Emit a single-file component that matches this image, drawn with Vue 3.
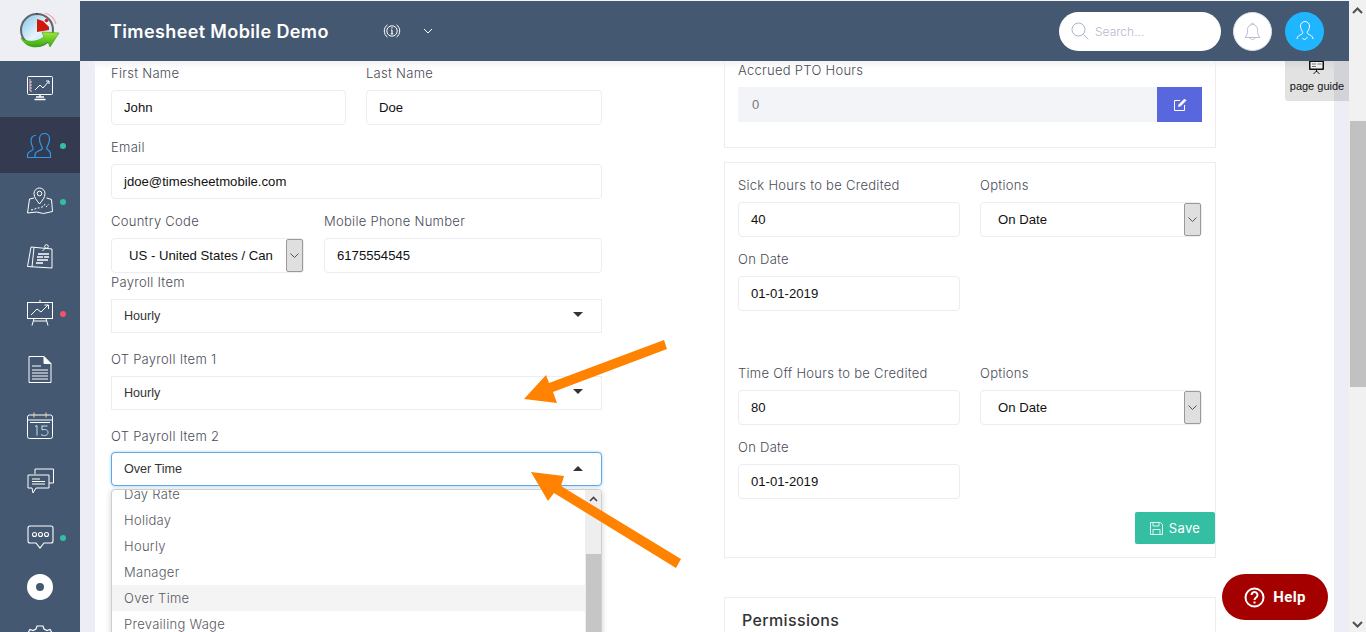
<script setup>
const navItems = [
  { id: 'dash' }, { id: 'users', active: true, dot: 'green' }, { id: 'map', dot: 'green' },
  { id: 'notes' }, { id: 'board', dot: 'red' }, { id: 'doc' }, { id: 'cal' },
  { id: 'chat' }, { id: 'msg', dot: 'green' }, { id: 'disc' }, { id: 'gear' }
]
const options = ['Day Rate', 'Holiday', 'Hourly', 'Manager', 'Over Time', 'Prevailing Wage']
</script>

<template>
  <div class="page">
    <div class="app">
      <header class="topbar">
        <div class="logo">
          <svg width="80" height="60" viewBox="0 1 80 60">
            <defs>
              <linearGradient id="face" x1="0" y1="0" x2="1" y2="1"><stop offset="0" stop-color="#7cc3ea"/><stop offset=".55" stop-color="#e6f5fc"/><stop offset="1" stop-color="#a9dbf2"/></linearGradient>
              <linearGradient id="green" x1="0" y1="0" x2="0" y2="1"><stop offset="0" stop-color="#a6e83c"/><stop offset="1" stop-color="#2ea80f"/></linearGradient>
            </defs>
            <path d="M44 16a12 12 0 0 1 9 9M45 13a16 16 0 0 1 11 11M42 18.500a9 9 0 0 1 8 7" fill="none" stroke="#e9a4a8" stroke-width="1.100"/>
            <circle cx="37" cy="30" r="16" fill="url(#face)" stroke="#62666c" stroke-width="2"/>
            <path d="M37 14.500v-1.500" stroke="#444" stroke-width="2"/>
            <path d="M37 32V19l6 2 6 6v3z" fill="#cf1a0a"/>
            <circle cx="46.500" cy="20.500" r="1.800" fill="#d0202a"/>
            <path d="M21 38c5 4 15 5 23-1l-2-5 17 1-9 14-2-5c-10 8-22 6-27-4z" fill="url(#green)" stroke="#3f9a10" stroke-width=".6"/>
          </svg>
        </div>
        <div class="bar">
          <h1 class="title">Timesheet Mobile Demo</h1>
          <svg class="info" width="20" height="16" viewBox="0 0 20 16" fill="none" stroke="#fff">
            <circle cx="10" cy="8" r="5.200"/>
            <path d="M5.500 1.800A7.600 7.600 0 0 0 5.500 14.200M14.500 1.800A7.600 7.600 0 0 1 14.500 14.200"/>
            <path d="M10 7v4M8.800 11h2.400M9 7h1M10 4.300v1.200" stroke-width="1.200"/>
          </svg>
          <svg class="caret" width="10" height="6" viewBox="0 0 10 6" fill="none" stroke="#fff"><path d="M1 1l4 4 4-4"/></svg>
          <div class="search">
            <svg width="18" height="18" viewBox="0 0 18 18" fill="none" stroke="#a9b4c4"><circle cx="7.500" cy="7.500" r="6.500"/><path d="M12.300 12.300l5 5"/></svg>
            <span>Search...</span>
          </div>
          <div class="round bell">
            <svg width="17" height="20" viewBox="0 0 17 20" fill="none" stroke="#b9bfd0"><path d="M1 16.500c2-2 2.500-4 2.500-8a5 5 0 0 1 10 0c0 4 .5 6 2.500 8z"/><path d="M7 3.500a1.500 1.500 0 0 1 3 0M6 17c1 2 4 2 5 0"/></svg>
          </div>
          <div class="round user">
            <svg width="18" height="20" viewBox="0 0 18 20" fill="none" stroke="#fff"><path d="M1 18c0-3 3-4 5-5 1-1 1-2 0-3-1-2-1.500-3.500-1.500-5a4.500 4.500 0 0 1 9 0c0 1.500-.5 3-1.500 5-1 1-1 2 0 3 2 1 5 2 5 5"/><path d="M6.500 17l2 2 3-3"/></svg>
          </div>
        </div>
      </header>

      <div class="body">
        <nav class="side">
          <div v-for="item in navItems" :key="item.id" class="nav" :class="{ active: item.active }">
            <svg v-if="item.id === 'dash'" width="26" height="26" viewBox="0 0 26 26" fill="none" stroke="#fff">
              <rect x=".5" y=".5" width="25" height="18" rx="1"/><path d="M9 21h8M13 19v2M7.500 23.500h11" stroke-width="1.500"/>
              <path d="M3 3v12h2M3 6h2M3 9h2M3 12h2" stroke="#f3c6d3"/><path d="M8 14l5-5 3 3 6-7M19 5h3v3"/>
            </svg>
            <svg v-else-if="item.id === 'users'" width="26" height="25" viewBox="0 0 26 25" fill="none" stroke="#2f9be8" stroke-width="1.200">
              <path d="M8 24.500v-3c0-3 5-3.500 7-5.500 1-1 0-2-1-4-1-2-1.500-4-1.500-6 0-3 2-5.500 5-5.500s5 2.500 5 5.500c0 2-.5 4-1.500 6-1 2-2 3-1 4 2 2 3.500 2 3.500 5.500v3z"/>
              <path d="M8 24.500H.5v-3c0-3 4-3 5.500-5 .5-1 0-2-1-4-1-2-1-4-1-5 0-3 2-5 4-5h1"/>
            </svg>
            <svg v-else-if="item.id === 'map'" width="26" height="28" viewBox="0 0 26 28" fill="none" stroke="#fff">
              <path d="M12.500 17c-3-4-5.500-6.500-5.500-10.500a5.500 5.500 0 0 1 11 0c0 4-2.500 6.500-5.500 10.500z"/><circle cx="12.500" cy="6.500" r="2.300"/>
              <path d="M7 11L2.500 12 .5 26l9-1 7 1.500 9-2-1-12-5-1.500"/><path d="M4 23c3 0 5-2 7-2s6-1 7-4M19 20l3-3" stroke-dasharray="2 1.500"/>
            </svg>
            <svg v-else-if="item.id === 'notes'" width="26" height="26" viewBox="0 0 26 26" fill="none" stroke="#fff">
              <path d="M4 3l21 2v19L.5 22.500z"/><path d="M7 3.500L5 23"/>
              <circle cx="19.500" cy="2.500" r="1.800"/><path d="M18.500 4l-3 3"/>
              <path d="M11 10h11M10 13h6M17 13h5M10 16h11M9 19h7" stroke-width="1.400"/>
            </svg>
            <svg v-else-if="item.id === 'board'" width="26" height="26" viewBox="0 0 26 26" fill="none" stroke="#fff">
              <rect x=".5" y="2.500" width="25" height="16"/><path d="M13 0v2.500M7 18.500l-2 7M19 18.500l2 7M6.500 21h13"/>
              <path d="M4 15l6-6 4 3 7-7M17.500 5h4v4"/>
            </svg>
            <svg v-else-if="item.id === 'doc'" width="24" height="27" viewBox="0 0 24 27" fill="none" stroke="#fff">
              <path d="M1 .5h15l7 7v19H1z"/><path d="M16 .5v7h7" fill="#fff"/>
              <path d="M4 10h9M4 14h16M4 17h16M4 20h16M4 23h16"/>
            </svg>
            <svg v-else-if="item.id === 'cal'" width="26" height="27" viewBox="0 0 26 27" fill="none" stroke="#fff">
              <rect x=".5" y="3" width="25" height="23.500" rx="2"/><path d="M.5 8h25M3 10.500h20"/><path d="M7 .5v5M19 .5v5" stroke="#f1d48a"/>
              <path d="M8 14.500l2-1v10M14.500 14h6M15 14v4c3-1 6-.5 6 2.500s-4 4-7 2" stroke="#bfe4f5"/>
            </svg>
            <svg v-else-if="item.id === 'chat'" width="27" height="26" viewBox="0 0 27 26" fill="none" stroke="#fff">
              <path d="M8 6V1h18.500v14H22"/><path d="M1 7h21v13H9l-3 5-1-5H1z"/>
              <path d="M5 11h8M5 13.500h13M5 16h13" stroke-width="1.100"/>
            </svg>
            <svg v-else-if="item.id === 'msg'" width="27" height="25" viewBox="0 0 27 25" fill="none" stroke="#fff" stroke-width="1.100">
              <path d="M3 1h21a2 2 0 0 1 2 2v13a2 2 0 0 1-2 2h-7l-4 5-4-5H3a2 2 0 0 1-2-2V3a2 2 0 0 1 2-2z"/>
              <circle cx="7.500" cy="9.500" r="2"/><circle cx="13.500" cy="9.500" r="2"/><circle cx="19.500" cy="9.500" r="2"/>
            </svg>
            <svg v-else-if="item.id === 'disc'" width="26" height="26" viewBox="0 0 26 26"><path fill="#fff" fill-rule="evenodd" d="M13 0a13 13 0 1 0 0 26a13 13 0 0 0 0-26zm0 9a4 4 0 1 1 0 8a4 4 0 0 1 0-8z"/></svg>
            <svg v-else width="26" height="26" viewBox="0 0 26 26" fill="none" stroke="#fff" stroke-width="1.200">
              <path d="M10 1h6l1 3 3 1.500 3-1 3 5-2 2.500v3l2 2.500-3 5-3-1L17 23l-1 3h-6l-1-3-3-1.500-3 1-3-5 2-2.500v-3L0 9.500l3-5 3 1L9 4z"/><circle cx="13" cy="13" r="4"/>
            </svg>
            <i v-if="item.dot" class="dot" :class="item.dot"></i>
          </div>
        </nav>

        <main class="main">
          <div class="card">
            <section class="left">
              <div class="row half">
                <div><label>First Name</label><div class="input">John</div></div>
                <div><label>Last Name</label><div class="input">Doe</div></div>
              </div>
              <div class="block mt12"><label>Email</label><div class="input">jdoe@timesheetmobile.com</div></div>
              <div class="row phone mt12">
                <div><label>Country Code</label>
                  <div class="input native country">US - United States / Can
                    <span class="spin"><svg width="9" height="5" viewBox="0 0 9 5" fill="none" stroke="#555"><path d="M.5.500l4 4 4-4"/></svg></span>
                  </div>
                </div>
                <div><label>Mobile Phone Number</label><div class="input">6175554545</div></div>
              </div>
              <div class="block mtn1"><label>Payroll Item</label><div class="input chosen">Hourly<i class="tri"></i></div></div>
              <div class="block mt16"><label>OT Payroll Item 1</label><div class="input chosen">Hourly<i class="tri"></i></div></div>
              <div class="block mt16"><label class="tight">OT Payroll Item 2</label><div class="input chosen focus">Over Time<i class="tri up"></i></div></div>
              <div class="drop">
                <ul class="opts">
                  <li v-for="o in options" :key="o" :class="{ hover: o === 'Over Time' }">{{ o }}</li>
                </ul>
                <div class="dropbar">
                  <svg width="9" height="6" viewBox="0 0 9 6" fill="none" stroke="#444" stroke-width="1.600"><path d="M1 5l3.500-3.500L8 5"/></svg>
                  <i class="thumb"></i>
                </div>
              </div>
            </section>

            <section class="right">
              <div class="box first">
                <label>Accrued PTO Hours</label>
                <div class="addon"><div class="input ro">0</div>
                  <button class="edit"><svg width="14" height="14" viewBox="0 0 14 14" fill="none" stroke="#fff"><path d="M7 2.500H1.500v10h10V7"/><path d="M5.500 8.500l.5-2L11.500 1l1.500 1.500L7.500 8z" fill="#fff" stroke-width=".7"/></svg></button>
                </div>
              </div>
              <div class="box second">
                <div class="row two">
                  <div><label>Sick Hours to be Credited</label><div class="input">40</div></div>
                  <div><label>Options</label><div class="input native date">On Date<span class="spin"><svg width="9" height="5" viewBox="0 0 9 5" fill="none" stroke="#555"><path d="M.5.500l4 4 4-4"/></svg></span></div></div>
                </div>
                <div class="row two mt12"><div><label>On Date</label><div class="input">01-01-2019</div></div></div>
                <div class="row two mt52">
                  <div><label>Time Off Hours to be Credited</label><div class="input">80</div></div>
                  <div><label>Options</label><div class="input native date">On Date<span class="spin"><svg width="9" height="5" viewBox="0 0 9 5" fill="none" stroke="#555"><path d="M.5.500l4 4 4-4"/></svg></span></div></div>
                </div>
                <div class="row two mt12"><div><label>On Date</label><div class="input">01-01-2019</div></div></div>
                <div class="actions">
                  <button class="save"><svg width="13" height="13" viewBox="0 0 13 13" fill="none" stroke="#dff5ef"><path d="M.5.500h10l2 2v10H.5z"/><path d="M3 .5v3.500h6V.5M3 12.500V7.500h7v5"/></svg>Save</button>
                </div>
              </div>
              <div class="box perms"><h2>Permissions</h2></div>
            </section>
          </div>
        </main>
      </div>
    </div>

    <aside class="scrollbar">
      <svg width="11" height="7" viewBox="0 0 11 7" fill="none" stroke="#505050" stroke-width="2"><path d="M1 6l4.500-4.500L10 6"/></svg>
      <i class="sthumb"></i>
      <svg class="down" width="11" height="7" viewBox="0 0 11 7" fill="none" stroke="#505050" stroke-width="2"><path d="M1 1l4.500 4.500L10 1"/></svg>
    </aside>

    <div class="guide">
      <svg width="16" height="16" viewBox="0 0 16 16"><rect x="0" y="0" width="15" height="11" rx="1" fill="#111"/><rect x="1.500" y="3" width="12" height="6.500" fill="#eee"/><path d="M3 5h4M8.500 5h4M3 7.500h4" stroke="#777"/><path d="M7.500 11v2M7.500 12l-3 3M7.500 12l3 3" stroke="#111"/></svg>
      <span>page guide</span>
    </div>

    <button class="help">
      <svg width="21" height="21" viewBox="0 0 21 21" fill="none" stroke="#fff" stroke-width="2"><circle cx="10.500" cy="10.500" r="9"/><path d="M7.500 8a3 3 0 1 1 4.500 2.600c-1 .6-1.500 1-1.500 2.400"/><path d="M10.500 14.500v2"/></svg>
      <span>Help</span>
    </button>

    <svg class="arrows" width="1366" height="632" viewBox="0 0 1366 632">
      <polygon fill="#ff8200" points="524,399 546,375 549,383 664,340 667,349 553,392 557,403"/>
      <polygon fill="#ff8200" points="531,472 564,476 561,486 681,559 676,568 554,493 548,501"/>
    </svg>
  </div>
</template>

<style>
html, body { margin: 0; height: 100%; overflow: hidden; background: #fff; }
</style>

<style scoped>
.page { position: relative; display: flex; width: 1366px; height: 632px; overflow: hidden; font-family: "Inter", "Liberation Sans", sans-serif; color: #575962; }
.app { flex: 1; min-width: 0; display: flex; flex-direction: column; }

.topbar { position: relative; z-index: 2; display: flex; height: 60px; margin-top: 1px; flex: none; }
.logo { width: 80px; background: #eeeff5; box-shadow: 0 -1px 0 #eeeff5; }
.logo svg { display: block; }
.bar { flex: 1; background: #445971; display: flex; align-items: center; padding-left: 30px; padding-right: 25px; box-shadow: 0 -1px 0 #f4f4f4; }
.title { margin: 0; width: 272px; font-size: 18px; font-weight: 600; color: #fff; white-space: nowrap; letter-spacing: .38px; }
.info { margin-right: 21px; }
.caret { margin-right: auto; }
.search { width: 162px; height: 39px; box-sizing: border-box; border-radius: 20px; background: #fff; display: flex; align-items: center; gap: 6px; padding-left: 12px; margin-right: 12px; font-size: 12px; font-weight: 300; color: #b9b6cf; }
.round { width: 39px; height: 39px; border-radius: 50%; display: flex; align-items: center; justify-content: center; box-sizing: border-box; }
.bell { background: #fff; margin-right: 13px; border: 1px solid #dfe0ea; }
.user { background: #1fb6ff; }

.body { flex: 1; min-height: 0; display: flex; }
.side { width: 80px; flex: none; background: #445971; display: flex; flex-direction: column; overflow: hidden; }
.nav { position: relative; height: 56px; flex: none; display: flex; align-items: center; justify-content: center; }
.nav.active { background: #343a50; }
.nav:nth-child(10) { height: 44px; }
.nav:nth-child(11) { height: 50px; margin-top: 4px; }
.dot { position: absolute; left: 60px; top: 50%; width: 6px; height: 6px; margin-top: -2px; border-radius: 50%; }
.dot.green { background: #34bfa3; }
.dot.red { background: #f4516c; }

.main { flex: 1; min-width: 0; background: #edeef5; padding: 0 15px; overflow: hidden; }
.card { background: #fff; height: 100%; display: flex; padding-left: 16px; box-shadow: inset 0 10px 10px -8px rgba(0,0,0,.08); }
.left { width: 491px; flex: none; padding-top: 2px; }
.right { width: 492px; flex: none; margin-left: 122px; }

label { display: block; height: 20px; line-height: 20px; margin-bottom: 7px; font-size: 13px; font-weight: 300; letter-spacing: .28px; color: #4a4c57; white-space: nowrap; }
label.tight { margin-bottom: 6px; }
.row { display: grid; gap: 20px; }
.half { grid-template-columns: 235px 236px; }
.phone { grid-template-columns: 193px 278px; }
.mt12 { margin-top: 12px; }
.mt16 { margin-top: 16px; }
.mt52 { margin-top: 52px; }
.mtn1 { margin-top: -1px; }

.input { position: relative; box-sizing: border-box; height: 35px; line-height: 33px; padding-left: 12px; background: #fff; border: 1px solid #ebedf2; border-radius: 4px; font-family: "Liberation Sans", Arial, sans-serif; font-size: 13.15px; color: #111; white-space: nowrap; }
.native.country, .native.date { padding-left: 17px; }
.spin { position: absolute; right: 0; top: 0; bottom: 0; width: 17px; box-sizing: border-box; display: flex; align-items: center; justify-content: center; background: #dfdfdf; border: 1px solid #9a9a9a; border-radius: 2px; }
.chosen { height: 34px; line-height: 33px; font-size: 12.6px; color: #333; border-radius: 0; padding-left: 12px; }
.tri { position: absolute; right: 18px; top: 12px; width: 0; height: 0; border-left: 5px solid transparent; border-right: 5px solid transparent; border-top: 5px solid #333; }
.tri.up { border-top: 0; border-bottom: 5px solid #333; top: 13px; }
.focus { border-color: #5ea9e6; border-radius: 4px; box-shadow: 0 0 3px rgba(94,169,230,.6); color: #333; }

.drop { display: flex; box-sizing: border-box; width: 491px; height: 200px; margin-top: 3px; background: #fff; border: 1px solid #cfcfcf; border-radius: 4px 4px 0 0; box-shadow: 0 1px 6px rgba(0,0,0,.18); overflow: hidden; }
.opts { flex: 1; list-style: none; margin: -9px 0 0; padding: 0; font-size: 13px; font-weight: 300; letter-spacing: .28px; color: #575962; }
.opts li { height: 26px; line-height: 26px; padding-left: 12px; }
.opts li.hover { background: #f4f4f4; }
.dropbar { width: 16px; flex: none; background: #eeeeee; display: flex; flex-direction: column; align-items: center; padding-top: 6px; box-sizing: border-box; }
.dropbar svg { flex: none; }
.thumb { display: block; width: 15px; flex: 1; margin-top: 52px; background: #c6c6c6; }

.box { box-sizing: border-box; border: 1px solid #ebedf2; padding: 0 13px; }
.first { margin-top: -30px; padding-top: 28px; height: 117px; }
.second { margin-top: 14px; height: 396px; padding-top: 12px; }
.two { grid-template-columns: 222px 222px; }
.addon { display: flex; }
.addon .input { flex: 1; }
.ro { background: #f3f4f8; border-color: #f3f4f8; border-radius: 0; color: #777; font-size: 13px; padding-left: 13px; }
.edit { width: 45px; height: 35px; border: 0; padding: 0; background: #5867dd; display: flex; align-items: center; justify-content: center; }
.actions { display: flex; justify-content: flex-end; margin-top: 13px; margin-right: -13px; }
.save { width: 80px; height: 32px; border: 0; border-radius: 2px; background: #34bfa3; color: #fff; font-family: "Inter", sans-serif; font-size: 13px; font-weight: 400; letter-spacing: .3px; display: flex; align-items: center; justify-content: center; gap: 6px; padding: 0; }
.perms { margin-top: 39px; height: 100px; padding-top: 12px; padding-left: 17px; }
.perms h2 { margin: 0; font-size: 16px; font-weight: 500; line-height: 20px; letter-spacing: .35px; color: #333; }

.scrollbar { width: 17px; flex: none; background: #f1f1f1; display: flex; flex-direction: column; align-items: center; position: relative; padding-top: 7px; box-sizing: border-box; }
.sthumb { display: block; width: 16px; height: 266px; margin-top: 107px; margin-left: 1px; background: #c1c1c1; }
.down { position: absolute; bottom: 4px; left: 3px; }

.guide { position: absolute; left: 1285px; top: 51px; width: 64px; height: 50px; border-radius: 3px 0 0 3px; background: rgba(0,0,0,.115); display: flex; flex-direction: column; align-items: center; padding-top: 8px; box-sizing: border-box; font-family: "Liberation Sans", Arial, sans-serif; font-size: 11px; color: #111; }
.guide svg { flex: none; }
.guide span { margin-top: 5px; white-space: nowrap; }
.help { position: absolute; left: 1222px; top: 574px; width: 106px; height: 46px; border: 0; border-radius: 23px; background: #a50000; color: #fff; display: flex; align-items: center; justify-content: center; gap: 8px; padding: 0; font-family: "Roboto", sans-serif; font-size: 15px; font-weight: 700; letter-spacing: .4px; }
.arrows { position: absolute; left: 0; top: 0; pointer-events: none; }
</style>
